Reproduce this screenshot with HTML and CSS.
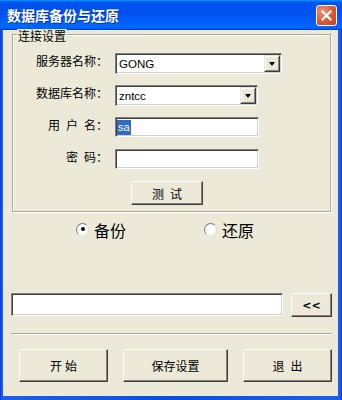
FILE: index.html
```html
<!DOCTYPE html>
<html>
<head>
    <meta charset="utf-8">
    <title>数据库备份与还原</title>
    <link rel="stylesheet" href="styles.css">
</head>
<body>
    <div class="window">
        <div class="titlebar">
            <span class="title">数据库备份与还原</span>
            <span class="close">
                <svg width="19" height="19" viewBox="0 0 19 19">
                    <path d="M5.5 5.5 L13.5 13.5 M13.5 5.5 L5.5 13.5" stroke="#fff" stroke-width="2.2" stroke-linecap="square"/>
                </svg>
            </span>
        </div>

        <div class="client">
            <div class="group">
                <div class="group-title">连接设置</div>
                <div class="form">
                    <label class="lbl">服务器名称：</label>
                    <div class="combo combo-server">
                        <span class="combo-text">GONG</span>
                        <span class="drop"></span>
                    </div>

                    <label class="lbl">数据库名称：</label>
                    <div class="combo combo-db">
                        <span class="combo-text">zntcc</span>
                        <span class="drop"></span>
                    </div>

                    <label class="lbl">用&ensp;户&ensp;名：</label>
                    <div class="field field-login"><span class="sel">sa</span></div>

                    <label class="lbl">密&ensp;码：</label>
                    <div class="field field-login"></div>

                    <button class="btn btn-test">测&ensp;试</button>
                </div>
            </div>

            <div class="radios">
                <div class="option"><span class="radio checked"></span><span class="option-text">备份</span></div>
                <div class="option"><span class="radio"></span><span class="option-text">还原</span></div>
            </div>

            <div class="path-row">
                <div class="field field-path"></div>
                <button class="btn btn-browse">&lt;&lt;</button>
            </div>

            <div class="sep"></div>

            <div class="actions">
                <button class="btn btn-action btn-start">开始</button>
                <button class="btn btn-action btn-save">保存设置</button>
                <button class="btn btn-action">退&ensp;出</button>
            </div>
        </div>
    </div>
</body>
</html>
```

FILE: styles.css
```css
body {
    margin: 0;
    font-family: "Noto Sans CJK SC", sans-serif;
    font-size: 12px;
    color: #000;
    background: #fff;
}
.window {
    width: 342px;
    height: 400px;
    display: flex;
    flex-direction: column;
    background: linear-gradient(90deg, #0831d9 0, #1c5fee 2px, #0a4de2 50%, #1c5fee calc(100% - 2px), #0831d9 100%);
}
.titlebar {
    height: 30px;
    display: flex;
    align-items: center;
    justify-content: space-between;
    padding: 0 5px 0 7px;
    background: linear-gradient(180deg, #0997ff, #0053ee 8%, #0050ee 40%, #06f 88%, #06f 93%, #005bff 95%, #003dd7 96%, #003dd7);
}
.title {
    color: #fff;
    font-weight: bold;
    font-size: 14px;
    line-height: 16px;
    text-shadow: 1px 1px 0 rgba(10, 24, 131, 0.6);
}
.close {
    width: 19px;
    height: 19px;
    border: 1px solid #fff;
    border-radius: 3px;
    background: radial-gradient(circle at 30% 30%, #f0957a, #e0603c 45%, #c63d1c 100%);
    display: flex;
}
.client {
    flex: 1;
    margin: 0 4px 4px 3px;
    background: #ece9d8;
}
.group {
    margin: 4px 7px 0 9px;
    padding-bottom: 6px;
    border: 1px solid #aca899;
    box-shadow: inset 1px 1px #fff, 1px 1px #fff;
}
.group-title {
    display: table;
    margin: -6px 0 0 4px;
    padding: 0 1px;
    line-height: 14px;
    background: #ece9d8;
}
.form {
    display: grid;
    grid-template-columns: 95px 1fr;
    grid-template-rows: repeat(4, 21px) 24px;
    column-gap: 7px;
    row-gap: 11px;
    margin-top: 10px;
}
.lbl {
    text-align: right;
    line-height: 14px;
    padding-top: 1px;
    white-space: nowrap;
}
.combo, .field {
    box-sizing: border-box;
    background: #fff;
    border: 1px solid;
    border-color: #808080 #fff #fff #808080;
    box-shadow: inset 1px 1px #404040, inset -1px -1px #d4d0c8;
    font-family: "Liberation Sans", "Noto Sans CJK SC", sans-serif;
    font-size: 11px;
}
.combo {
    height: 21px;
    display: flex;
    align-items: center;
    padding: 1px;
}
.combo-server {
    width: 167px;
}
.combo-db {
    width: 143px;
}
.combo-text {
    flex: 1;
    padding-left: 2px;
    font-size: 11.5px;
}
.drop {
    width: 16px;
    height: 17px;
    box-sizing: border-box;
    background: #ece9d8;
    border: 1px solid;
    border-color: #ece9d8 #404040 #404040 #ece9d8;
    box-shadow: inset 1px 1px #fff, inset -1px -1px #808080;
    display: flex;
    align-items: center;
    justify-content: center;
}
.drop::after {
    content: "";
    border-style: solid;
    border-width: 4px 3.5px 0;
    border-color: #000 transparent transparent;
}
.field {
    height: 20px;
    padding: 2px 1px 0;
}
.field-login {
    width: 144px;
}
.sel {
    display: inline-block;
    line-height: 15px;
    padding: 0 1px;
    background: #316ac5;
    color: #fff;
}
.btn {
    box-sizing: border-box;
    margin: 0;
    padding: 0;
    background: #ece9d8;
    border: 1px solid;
    border-color: #fff #404040 #404040 #fff;
    box-shadow: inset -1px -1px #808080, inset 1px 1px #ece9d8;
    font-family: "Noto Sans CJK SC", sans-serif;
    font-size: 12px;
    color: #000;
}
.btn-test {
    grid-column: 2;
    justify-self: start;
    width: 72px;
    height: 24px;
    margin-left: 16px;
}
.radios {
    display: flex;
    margin-top: 9px;
    padding-left: 73px;
    font-size: 16px;
    line-height: 18px;
}
.option {
    width: 128px;
    display: flex;
    align-items: center;
    gap: 5px;
}
.radio {
    width: 13px;
    height: 13px;
    box-sizing: border-box;
    border-radius: 50%;
    border: 1px solid;
    border-color: #808080 #e4e2d6 #e4e2d6 #808080;
    background: radial-gradient(circle at 60% 60%, #fff 55%, #e6e4da);
    display: flex;
    align-items: center;
    justify-content: center;
    margin-top: -2px;
}
.radio.checked::after {
    content: "";
    width: 4px;
    height: 4px;
    border-radius: 50%;
    background: #000;
}
.path-row {
    display: flex;
    gap: 8px;
    margin-top: 54px;
    padding: 0 6px 0 8px;
}
.field-path {
    width: 272px;
    height: 23px;
}
.btn-browse {
    width: 41px;
    height: 24px;
    font-family: "DejaVu Sans", sans-serif;
    font-size: 11px;
    font-weight: bold;
}
.sep {
    margin: 16px 6px 0 8px;
    border-top: 1px solid #aca899;
    border-bottom: 1px solid #fff;
}
.actions {
    display: flex;
    gap: 15px;
    margin-top: 14px;
    padding-left: 16px;
}
.btn-action {
    width: 89px;
    height: 33px;
}
.btn-start {
    letter-spacing: 3px;
    text-indent: 3px;
}
.btn-save {
    width: 105px;
}
```
